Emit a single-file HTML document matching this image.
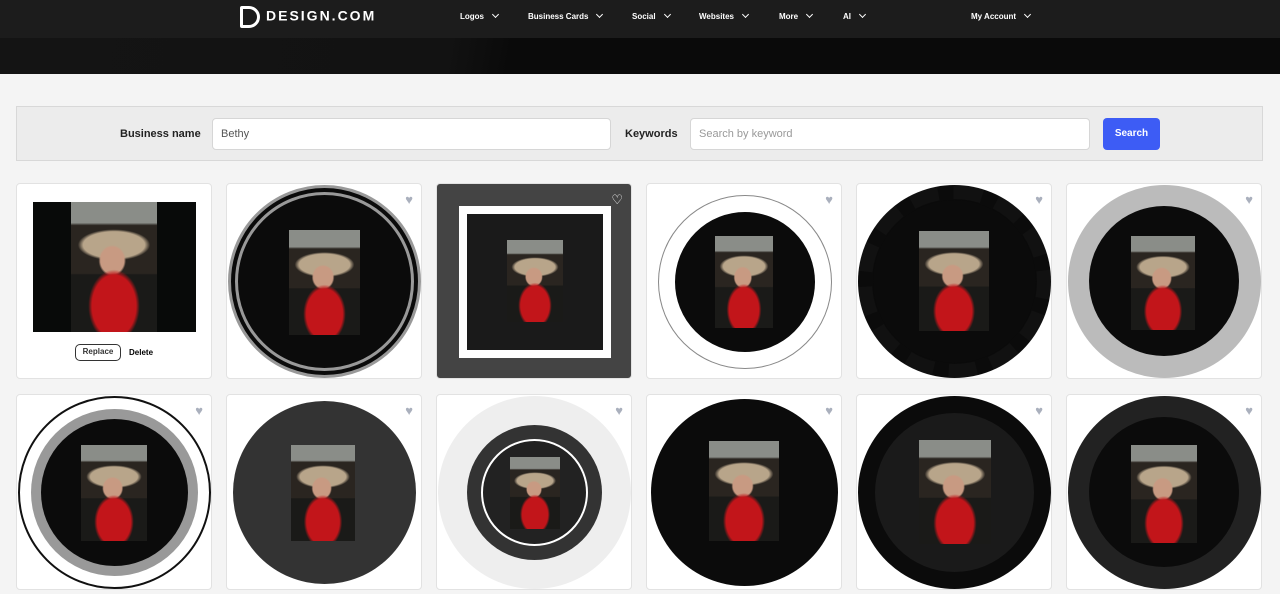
<!DOCTYPE html>
<html><head><meta charset="utf-8"><style>
*{margin:0;padding:0;box-sizing:border-box}
body{width:1280px;height:594px;overflow:hidden;background:#f4f4f4;font-family:"Liberation Sans",sans-serif;position:relative}
.nav{position:absolute;left:0;top:0;width:1280px;height:38px;background:#1c1c1c}
.hero{position:absolute;left:0;top:38px;width:1280px;height:36px;background:linear-gradient(100deg,#141414 0%,#121212 35%,#0a0a0a 40%,#0a0a0a 100%)}
.logo{position:absolute;left:240px;top:6px;color:#fff;font-weight:bold;font-size:14px;letter-spacing:2px}
.nv{position:absolute;top:12px;color:#fff;font-size:8px;font-weight:bold}
.nv:after{content:"";display:inline-block;width:4px;height:4px;border-right:1.3px solid #fff;border-bottom:1.3px solid #fff;transform:rotate(45deg);margin-left:9px;position:relative;top:-2px}
.bar{position:absolute;left:16px;top:106px;width:1247px;height:55px;background:#ececec;border:1px solid #d8d8d8}
.lbl{position:absolute;top:128px;font-size:11px;font-weight:bold;color:#222}
.inp{position:absolute;top:118px;height:32px;background:#fff;border:1px solid #d6d6d6;border-radius:4px;font-size:11px;padding:9px 8px;color:#777}
.btn{position:absolute;left:1103px;top:118px;width:57px;height:32px;background:#3d5cf5;border-radius:4px;color:#fff;font-size:10px;font-weight:bold;text-align:center;line-height:32px}
.card{position:absolute;width:196px;height:196px;background:#fff;border:1px solid #e2e2e2;border-radius:4px;overflow:hidden}
.c{position:absolute;left:1px;top:1px;width:193px;height:193px;border-radius:50%;background:#0b0b0b}
.ph{position:absolute;width:70px;height:95px;background:
radial-gradient(ellipse 30% 28% at 50% 80%,#c2151a 85%,transparent 100%),
radial-gradient(ellipse 16% 12% at 48% 45%,#c89a82 85%,transparent 100%),
radial-gradient(ellipse 42% 12% at 50% 33%,#b8a58a 85%,transparent 100%),
linear-gradient(#8a8d88 0,#8a8d88 16%,#2a2520 18%,#2a2520 55%,#1a1a18 56%)}
.heart{position:absolute;right:8px;top:8px;color:#aab0bd;font-size:13px}
</style></head><body>
<div class="nav"></div><div class="hero"></div>
<div class="logo"><span style="display:inline-block;width:20px;height:22px;border:3px solid #fff;border-radius:2px 11px 11px 2px;vertical-align:middle;margin-right:6px"></span>DESIGN.COM</div>
<div class="nv" style="left:460px">Logos</div>
<div class="nv" style="left:528px">Business Cards</div>
<div class="nv" style="left:632px">Social</div>
<div class="nv" style="left:699px">Websites</div>
<div class="nv" style="left:779px">More</div>
<div class="nv" style="left:843px">AI</div>
<div class="nv" style="left:971px">My Account</div>
<div class="bar"></div>
<div class="lbl" style="left:120px">Business name</div>
<div class="inp" style="left:212px;width:399px;color:#555">Bethy</div>
<div class="lbl" style="left:625px">Keywords</div>
<div class="inp" style="left:690px;width:400px;color:#999">Search by keyword</div>
<div class="btn">Search</div>

<div class="card" style="left:16px;top:183px">
<div style="position:absolute;left:16px;top:18px;width:163px;height:130px;background:#080a09"></div>
<div class="ph" style="left:54px;top:18px;width:86px;height:130px"></div>
<div style="position:absolute;left:58px;top:160px;width:46px;height:17px;border:1.5px solid #333;border-radius:5px;font-size:8px;font-weight:bold;text-align:center;line-height:14px;color:#333">Replace</div>
<div style="position:absolute;left:112px;top:164px;font-size:8px;font-weight:bold">Delete</div>
</div>

<div class="card" style="left:226px;top:183px"><div class="c" style="border:10px double #999"></div><div class="ph" style="left:62px;top:46px;width:71px;height:105px"></div><div class="heart">♥</div></div>
<div class="card" style="left:436px;top:183px;background:#444"><div style="position:absolute;left:22px;top:22px;width:152px;height:152px;border:8px solid #fff;background:#1a1a1a"></div><div class="ph" style="left:70px;top:56px;width:56px;height:82px"></div><div class="heart" style="color:#fff">♡</div></div>
<div class="card" style="left:646px;top:183px"><div class="c" style="left:26px;top:26px;width:144px;height:144px;border:2px solid #fff;box-shadow:0 0 0 14px #fff,0 0 0 15px #888"></div><div class="ph" style="left:68px;top:52px;width:58px;height:92px"></div><div class="heart">♥</div></div>
<div class="card" style="left:856px;top:183px"><div class="c" style="border:14px dashed #111"></div><div class="c" style="left:16px;top:16px;width:163px;height:163px"></div><div class="ph" style="left:62px;top:47px;width:70px;height:100px"></div><div class="heart">♥</div></div>
<div class="card" style="left:1066px;top:183px"><div class="c" style="background:#bbb"></div><div class="c" style="left:22px;top:22px;width:150px;height:150px"></div><div class="ph" style="left:64px;top:52px;width:64px;height:94px"></div><div class="heart">♥</div></div>

<div class="card" style="left:16px;top:394px"><div class="c" style="background:#fff;border:2px solid #111"></div><div class="c" style="left:14px;top:14px;width:167px;height:167px;background:#999"></div><div class="c" style="left:24px;top:24px;width:147px;height:147px"></div><div class="ph" style="left:64px;top:50px;width:66px;height:96px"></div><div class="heart">♥</div></div>
<div class="card" style="left:226px;top:394px"><div class="c" style="left:6px;top:6px;width:183px;height:183px;background:#333"></div><div class="ph" style="left:64px;top:50px;width:64px;height:96px"></div><div class="heart">♥</div></div>
<div class="card" style="left:436px;top:394px"><div class="c" style="background:#eee"></div><div class="c" style="left:30px;top:30px;width:135px;height:135px;background:#333"></div><div class="c" style="left:44px;top:44px;width:107px;height:107px;border:2px solid #fff;background:#222"></div><div class="ph" style="left:73px;top:62px;width:50px;height:72px"></div><div class="heart">♥</div></div>
<div class="card" style="left:646px;top:394px"><div class="c" style="left:4px;top:4px;width:187px;height:187px"></div><div class="ph" style="left:62px;top:46px;width:70px;height:100px"></div><div class="heart">♥</div></div>
<div class="card" style="left:856px;top:394px"><div class="c"></div><div class="c" style="left:18px;top:18px;width:159px;height:159px;background:#1a1a1a"></div><div class="ph" style="left:62px;top:45px;width:72px;height:104px"></div><div class="heart">♥</div></div>
<div class="card" style="left:1066px;top:394px"><div class="c" style="background:#222"></div><div class="c" style="left:22px;top:22px;width:150px;height:150px"></div><div class="ph" style="left:64px;top:50px;width:66px;height:98px"></div><div class="heart">♥</div></div>
</body></html>
